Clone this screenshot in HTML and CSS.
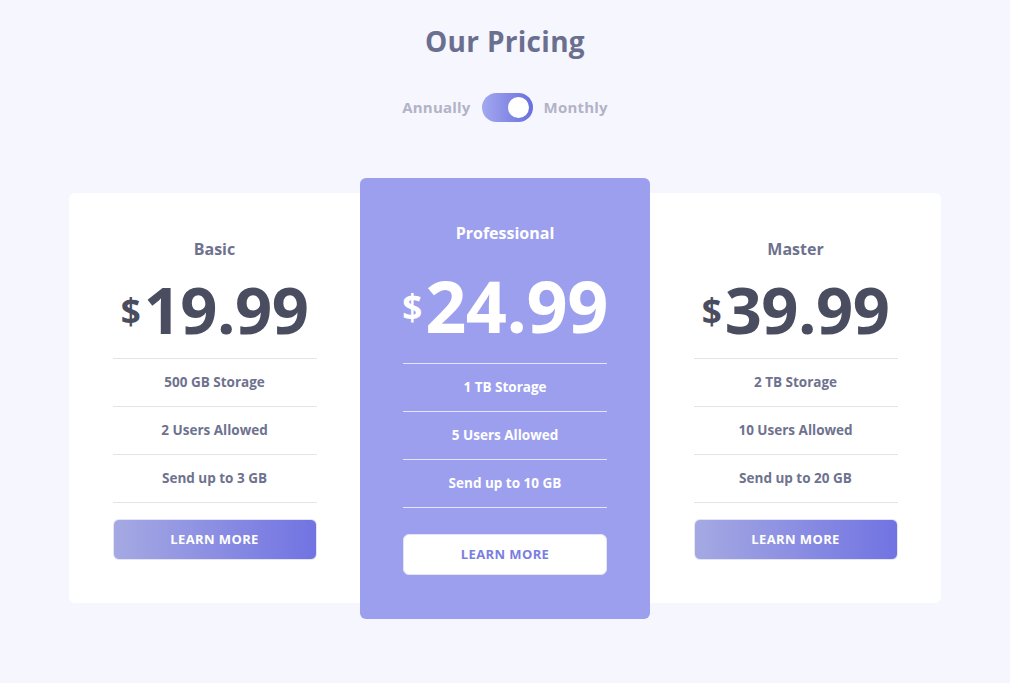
FILE: index.html
```html
<!DOCTYPE html>
<html lang="en">
<head>
<meta charset="utf-8">
<title>Our Pricing</title>
<link rel="stylesheet" href="styles.css">
</head>
<body>
<main class="page">
  <h1 class="title">Our Pricing</h1>
  <div class="switch-row">
    <span class="switch-label">Annually</span>
    <span class="switch"><span class="knob"></span></span>
    <span class="switch-label">Monthly</span>
  </div>
  <section class="cards">
    <article class="card card-side card-left">
      <h2 class="plan">Basic</h2>
      <div class="price"><span class="cur">$</span><span class="amt">19.99</span></div>
      <ul class="features">
        <li>500 GB Storage</li>
        <li>2 Users Allowed</li>
        <li>Send up to 3 GB</li>
      </ul>
      <a class="btn" href="#">LEARN MORE</a>
    </article>
    <article class="card card-mid">
      <h2 class="plan">Professional</h2>
      <div class="price"><span class="cur">$</span><span class="amt">24.99</span></div>
      <ul class="features">
        <li>1 TB Storage</li>
        <li>5 Users Allowed</li>
        <li>Send up to 10 GB</li>
      </ul>
      <a class="btn btn-light" href="#">LEARN MORE</a>
    </article>
    <article class="card card-side card-right">
      <h2 class="plan">Master</h2>
      <div class="price"><span class="cur">$</span><span class="amt">39.99</span></div>
      <ul class="features">
        <li>2 TB Storage</li>
        <li>10 Users Allowed</li>
        <li>Send up to 20 GB</li>
      </ul>
      <a class="btn" href="#">LEARN MORE</a>
    </article>
  </section>
</main>
</body>
</html>
```
FILE: styles.css
```css
* { box-sizing: border-box; }
html, body { margin: 0; padding: 0; }
body {
  background: #f6f6fe;
  font-family: "Open Sans", "Liberation Sans", sans-serif;
  font-weight: 700;
  color: #6e728e;
}
.page {
  width: 1010px;
  height: 683px;
  padding-top: 22px;
}
.title {
  margin: 0;
  text-align: center;
  font-size: 28px;
  line-height: 38px;
  font-weight: 700;
  color: #6b6f8f;
  letter-spacing: 0.3px;
}
.switch-row {
  display: flex;
  justify-content: center;
  align-items: center;
  gap: 11px;
  margin-top: 32px;
  height: 30px;
}
.switch-label {
  font-size: 15px;
  color: #b2b3c6;
  letter-spacing: 0.2px;
}
.switch {
  position: relative;
  width: 51px;
  height: 29px;
  border-radius: 15px;
  background: linear-gradient(90deg, #a3a8f0, #696fdd);
}
.knob {
  position: absolute;
  top: 4px;
  right: 4px;
  width: 21px;
  height: 21px;
  border-radius: 50%;
  background: #fff;
}
.cards {
  display: flex;
  justify-content: center;
  align-items: flex-start;
  margin-top: 56px;
}
.card {
  width: 291px;
  display: flex;
  flex-direction: column;
  align-items: center;
  padding: 0 43px;
}
.card-side {
  background: #fff;
  height: 410px;
  margin-top: 15px;
  padding-top: 46px;
}
.card-left { border-radius: 6px 0 0 6px; }
.card-right { border-radius: 0 6px 6px 0; }
.card-mid {
  width: 290px;
  height: 441px;
  background: #9c9fee;
  border-radius: 6px;
  padding-top: 45px;
  color: #fff;
}
.plan {
  margin: 0;
  font-size: 16px;
  line-height: 20px;
  font-weight: 700;
  color: #6e728e;
}
.card-mid .plan { color: #fff; }
.price {
  display: flex;
  align-items: center;
  justify-content: center;
  color: #4a4d60;
  height: 60px;
  margin-top: 20px;
  margin-bottom: 19px;
}
.card-mid .price {
  color: #fff;
  height: 76px;
  margin-top: 24px;
  margin-bottom: 20px;
}
.cur {
  font-size: 35px;
  line-height: 40px;
  margin-right: 3px;
  padding-top: 4px;
}
.amt {
  font-size: 65px;
  line-height: 60px;
  letter-spacing: -0.5px;
}
.card-mid .amt { font-size: 72px; line-height: 76px; }
.features {
  list-style: none;
  margin: 0;
  padding: 0;
  width: 204px;
  border-top: 1px solid #e3e3ec;
}
.features li {
  height: 48px;
  line-height: 46px;
  text-align: center;
  font-size: 13.5px;
  color: #6e728e;
  border-bottom: 1px solid #e3e3ec;
}
.card-mid .features { border-top-color: #e4e5fb; }
.card-mid .features li {
  color: #fff;
  border-bottom-color: #e4e5fb;
}
.btn {
  display: block;
  width: 204px;
  height: 41px;
  margin-top: 16px;
  border-radius: 6px;
  background: linear-gradient(90deg, #a5a9e2, #7173e2);
  color: #fff;
  text-decoration: none;
  text-align: center;
  font-size: 13px;
  letter-spacing: 0.4px;
  border: 1px solid #e4e5f4;
  line-height: 39px;
}
.btn-light {
  background: #fff;
  color: #7a7ee0;
  margin-top: 26px;
}
```
